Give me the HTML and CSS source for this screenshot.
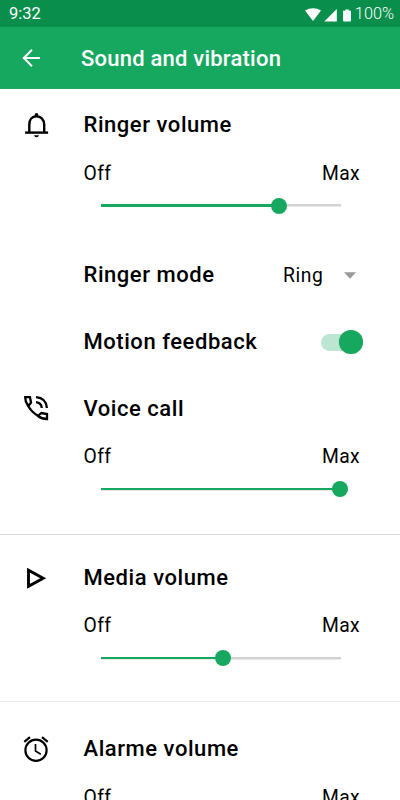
FILE: index.html
```html
<!DOCTYPE html>
<html lang="en">
<head>
<meta charset="utf-8">
<title>Sound and vibration</title>
<link rel="stylesheet" href="styles.css">
</head>
<body>
<header>
  <div class="status">
    <span class="time">9:32</span>
    <svg class="signals" width="48" height="14" viewBox="0 0 48 14" fill="#fff">
      <path d="M0 2.6Q8 -2 16 2.6L8 13Z"/>
      <path d="M31.8 1V13.6H19.2Z"/>
      <path d="M38 2.8h2.2V1.4h3.6v1.4H46v9.8q0 1-1 1h-6q-1 0-1-1Z"/>
    </svg>
    <span class="battery">100%</span>
  </div>
  <div class="appbar">
    <svg class="back" width="20" height="20" viewBox="0 0 20 20" fill="none" stroke="#fff" stroke-width="2"><path d="M19 10H3M11 1.8L2.8 10l8.2 8.2"/></svg>
    <h1>Sound and vibration</h1>
  </div>
</header>
<main>
  <section class="ringer">
    <svg class="icon" viewBox="0 0 28 28" fill="none" stroke="#000" stroke-width="2.4"><path d="M7.300 21.5V13.5C7.300 8.800 10.100 5.200 14.500 5.200s7.700 3.600 7.700 8.300v8"/><path d="M3.100 21.600H26.100"/><circle cx="14.500" cy="3.700" r="1.800" fill="#000" stroke="none"/><path d="M12 24.200h5q-.5 2-2.500 2t-2.500-2Z" fill="#000" stroke="none"/></svg>
    <div class="content">
      <h2>Ringer volume</h2>
      <div class="labels"><span>Off</span><span>Max</span></div>
      <div class="slider"><i class="fill" style="width:178px"></i><i class="thumb"></i></div>
      <div class="row mode"><h2>Ringer mode</h2><span class="select">Ring<svg width="12" height="7" viewBox="0 0 12 7"><path d="M0 .3h12L6 6.700Z" fill="#999"/></svg></span></div>
      <div class="row motion"><h2>Motion feedback</h2><span class="switch"><i></i></span></div>
    </div>
  </section>
  <section class="voice">
    <svg class="icon" viewBox="0 0 28 28" fill="none" stroke="#000" stroke-width="2.3"><path d="M3.200 3.200H8L9 8.700 6.200 12C3.800 8.500 3.100 5.800 3.200 3.200ZM6 11.500C8.500 16.500 11.800 19.500 16.500 22M16 22L19.300 19l5.700 1v5C21.500 25 18.500 24 16 22Z"/><path d="M14 8.200Q19.300 8.700 19.800 14M14 3.200Q24.200 4 24.900 14"/></svg>
    <div class="content">
      <h2>Voice call</h2>
      <div class="labels"><span>Off</span><span>Max</span></div>
      <div class="slider"><i class="fill" style="width:239px"></i><i class="thumb"></i></div>
    </div>
  </section>
  <section class="media">
    <svg class="icon" viewBox="0 0 28 28" fill="none" stroke="#000" stroke-width="2.900"><path d="M6.500 6.200V22.200L21.200 14.200Z"/></svg>
    <div class="content">
      <h2>Media volume</h2>
      <div class="labels"><span>Off</span><span>Max</span></div>
      <div class="slider"><i class="fill" style="width:122px"></i><i class="thumb"></i></div>
    </div>
  </section>
  <section class="alarm">
    <svg class="icon" viewBox="0 0 28 28" fill="none" stroke="#000" stroke-width="2.200"><circle cx="14" cy="15.200" r="10.600"/><path d="M2.300 6.800L8 2.100M20 2.100l5.700 4.700"/><path d="M13.500 9.100v7L18.800 19.200" stroke-width="1.700"/></svg>
    <div class="content">
      <h2>Alarme volume</h2>
      <div class="labels"><span>Off</span><span>Max</span></div>
    </div>
  </section>
</main>
</body>
</html>
```
FILE: styles.css
```css
* { box-sizing: border-box; }
body { margin: 0; height: 800px; overflow: hidden; background: #fff; color: #000; font-family: Roboto, sans-serif; }
h1, h2 { margin: 0; font-size: 22px; line-height: 30px; font-weight: 500; white-space: nowrap; }
.status { height: 27px; display: flex; align-items: center; padding: 0 6px 0 9px; background: #098e4c; color: #fff; font-size: 16.5px; line-height: 27px; }
.time { margin-right: auto; }
.signals { margin: 2px 2px 0 0; }
.battery { font-size: 16.3px; font-weight: 300; }
.appbar { height: 62px; display: flex; align-items: center; padding: 0 0 0 21px; background: #17a860; color: #fff; }
.back { margin-right: 40px; }
h1 { letter-spacing: .22px; padding-top: 2px; }
h2 { letter-spacing: .55px; }
section { display: flex; align-items: flex-start; padding: 0 40px 0 22px; }
.icon { width: 28px; height: 28px; margin: 1px 33.500px 0 0; flex: none; }
.content { flex: 1; }
.ringer { padding-top: 21px; }
.voice { padding-top: 36px; height: 178px; border-bottom: 1px solid #ddd; }
.media { padding-top: 28px; height: 167px; border-bottom: 1px solid #e9e9e9; }
.alarm { padding-top: 32px; }
.labels { display: flex; justify-content: space-between; margin-top: 21.500px; font-size: 19.3px; line-height: 24px; letter-spacing: .4px; }
.slider { width: 240px; height: 16px; margin: 12px 0 0 17px; display: flex; align-items: center; background: linear-gradient(#d2d2d2, #d2d2d2) center / 100% 2.500px no-repeat; }
.media .labels { margin-top: 21px; }
.fill { height: 2.500px; background: #17a860; flex: none; }
.thumb { width: 16px; height: 16px; margin-left: -8px; border-radius: 50%; background: #17a860; flex: none; }
.row { display: flex; justify-content: space-between; align-items: center; height: 30px; }
.mode { margin-top: 46.500px; }
.motion { margin-top: 37px; }
.voice .content { padding-top: .500px; }
.select { display: flex; align-items: center; gap: 20.500px; padding-right: 4px; font-size: 19.300px; letter-spacing: .6px; }
.switch { display: flex; align-items: center; justify-content: flex-end; width: 42px; height: 17px; border-radius: 9px; background: #bce6d1; margin-right: -3px; }
.switch i { width: 24px; height: 24px; flex: none; border-radius: 50%; background: #17a860; box-shadow: 0 0 1px #0004; }
```
